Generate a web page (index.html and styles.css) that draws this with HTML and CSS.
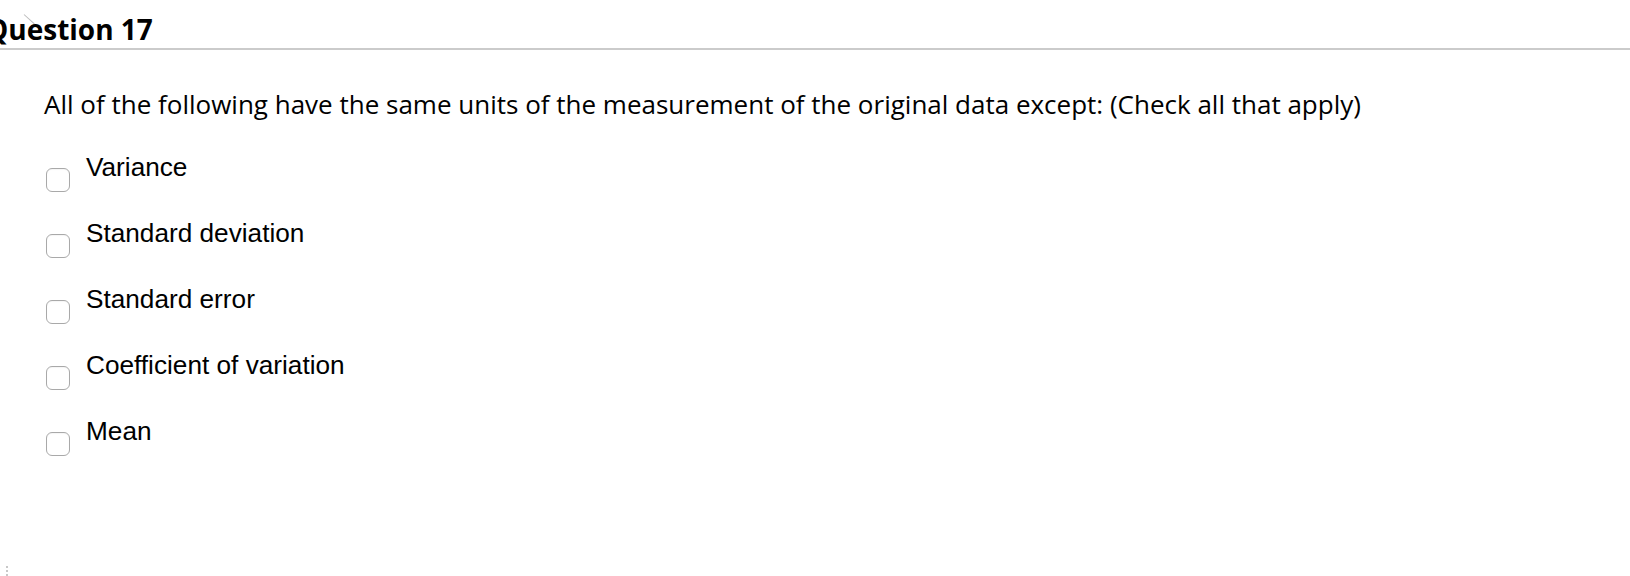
FILE: index.html
```html
<!DOCTYPE html>
<html>
<head>
<meta charset="utf-8">
<link rel="stylesheet" href="styles.css">
</head>
<body>
<div class="page">
  <div class="header">
    <h2 class="title">Question 17</h2>
    <span class="cursor-mark"></span>
  </div>
  <div class="body">
    <p class="question">All of the following have the same units of the measurement of the original data except: (Check all that apply)</p>
    <div class="answers">
      <label class="answer"><span class="box"></span><span class="label">Variance</span></label>
      <label class="answer"><span class="box"></span><span class="label">Standard deviation</span></label>
      <label class="answer"><span class="box"></span><span class="label">Standard error</span></label>
      <label class="answer"><span class="box"></span><span class="label">Coefficient of variation</span></label>
      <label class="answer"><span class="box"></span><span class="label">Mean</span></label>
    </div>
  </div>
  <div class="grip"><i></i><i></i><i></i></div>
</div>
</body>
</html>
```
FILE: styles.css
```css
html, body {
  margin: 0;
  padding: 0;
  background: #fff;
}
.page {
  position: relative;
  width: 1630px;
  height: 576px;
  overflow: hidden;
}
.header {
  position: relative;
  height: 48px;
  border-bottom: 2px solid #cbcbcb;
}
.title {
  margin: 0;
  padding-top: 11px;
  margin-left: -14px;
  font-family: "Open Sans", sans-serif;
  font-weight: 700;
  font-size: 28px;
  line-height: 36px;
  color: #000;
}
.cursor-mark {
  position: absolute;
  left: 24px;
  top: 14px;
  width: 14px;
  height: 1px;
  background: #bbb;
  transform: rotate(42deg);
  transform-origin: left center;
}
.body {
  padding-left: 44px;
}
.question {
  margin: 0;
  padding-top: 37px;
  font-family: "Open Sans", sans-serif;
  font-size: 26px;
  line-height: 34px;
  color: #000;
}
.answers {
  display: flex;
  flex-direction: column;
  margin-top: 31px;
}
.answer {
  display: flex;
  align-items: flex-start;
  height: 66px;
}
.box {
  box-sizing: border-box;
  width: 24px;
  height: 24px;
  margin-left: 2px;
  margin-top: 16px;
  border: 1px solid #a9a9a9;
  border-radius: 6px;
  background: #fff;
  box-shadow: inset 0 1px 1px rgba(0,0,0,0.04);
}
.label {
  margin-left: 16px;
  font-family: "Liberation Sans", Arial, sans-serif;
  font-size: 26.2px;
  line-height: 30px;
  color: #000;
}
.grip {
  position: absolute;
  left: 6px;
  top: 566px;
  display: flex;
  flex-direction: column;
  gap: 2px;
}
.grip i {
  display: block;
  width: 2px;
  height: 2px;
  background: #c8c8c8;
}
```
